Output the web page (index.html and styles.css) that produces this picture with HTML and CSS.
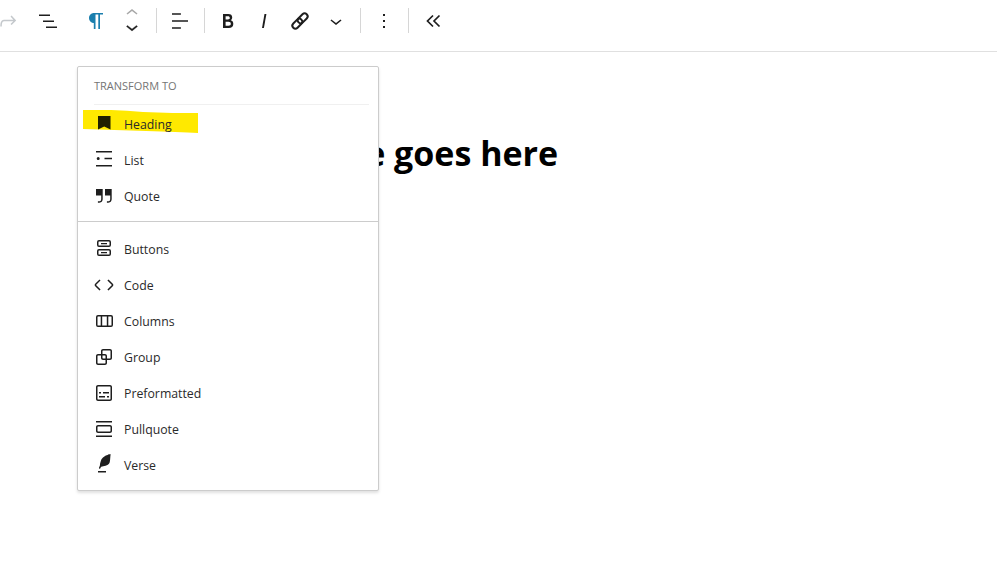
FILE: index.html
```html
<!DOCTYPE html>
<html lang="en">
<head>
<meta charset="utf-8">
<title>Transform block</title>
<link rel="stylesheet" href="styles.css">
</head>
<body>
<header class="toolbar">
  <button class="tool tool-redo"><svg viewBox="0 0 24 24"><path d="M15.6 6.5l-1.1 1 2.9 3.3H8c-.9 0-1.7.3-2.3.9-1.4 1.5-1.4 4.2-1.4 5.6v.2h1.5v-.3c0-1.1 0-3.5 1-4.5.3-.3.7-.5 1.3-.5h9.2L14.5 15l1.1 1.1 4.6-4.6-4.6-5z"/></svg></button>
  <button class="tool tool-list"><svg viewBox="0 0 24 24"><path d="M4 7h11V5.500H4zM8 13h11v-1.500H8zM11 19h11v-1.500H11z"/></svg></button>
  <button class="tool tool-para"><svg viewBox="0 0 24 24"><path d="M20 4H11c-2.800 0-5 2.200-5 5s2.200 5 4.800 5V20h1.700V5.500h2.800V20h1.700V5.500H20z"/></svg></button>
  <div class="mover">
    <svg class="mover-up" viewBox="0 0 24 24"><path d="M6.500 12.400L12 8l5.500 4.400-.9 1.200L12 10l-4.500 3.600-1-1.200z"/></svg>
    <svg class="mover-down" viewBox="0 0 24 24"><path d="M17.500 11.600L12 16l-5.500-4.400.9-1.200L12 14l4.500-3.600 1 1.200z"/></svg>
  </div>
  <span class="sep sep-first"></span>
  <button class="tool"><svg viewBox="0 0 24 24"><path d="M4 19.800h8.900v-1.500H4v1.500zm8.900-15.600H4v1.500h8.900V4.200zm-8.900 7v1.500h16v-1.500H4z"/></svg></button>
  <span class="sep"></span>
  <button class="tool"><svg viewBox="0 0 24 24"><path d="M14.700 11.300c1-.6 1.500-1.600 1.500-3 0-2.300-1.300-3.400-4-3.400H7v14h5.800c1.400 0 2.500-.3 3.300-1 .8-.7 1.200-1.700 1.200-2.900.1-1.900-.8-3.100-2.600-3.700zm-5.100-4h2.300c.6 0 1.100.1 1.400.4.3.3.5.7.5 1.200s-.2 1-.5 1.200c-.3.3-.8.4-1.400.4H9.600V7.300zm4.600 9c-.4.3-1 .4-1.700.4H9.600v-3.900h2.900c.7 0 1.300.2 1.700.5.4.3.6.8.6 1.500s-.2 1.200-.6 1.500z"/></svg></button>
  <button class="tool"><svg viewBox="0 0 24 24"><path d="M12.500 5L10 19h1.900l2.500-14z"/></svg></button>
  <button class="tool"><svg class="icon-link" viewBox="0 0 24 24"><g transform="rotate(-45 12 12)"><rect x="2.500" y="9" width="11.500" height="6" rx="3"/><rect x="10" y="9" width="11.500" height="6" rx="3"/></g></svg></button>
  <button class="tool"><svg viewBox="0 0 24 24"><path d="M17.500 11.600L12 16l-5.500-4.400.9-1.200L12 14l4.500-3.600 1 1.200z"/></svg></button>
  <span class="sep"></span>
  <button class="tool"><svg viewBox="0 0 24 24"><path d="M13 19h-2v-2h2v2zm0-6h-2v-2h2v2zm0-6h-2V5h2v2z"/></svg></button>
  <span class="sep"></span>
  <button class="tool tool-collapse"><svg class="icon-collapse" viewBox="0 0 24 24"><path d="M12 6.500 6.500 12l5.500 5.500M18.500 6.500 13 12l5.500 5.500"/></svg></button>
</header>

<main class="canvas">
  <h1 class="title">Your title goes here</h1>
</main>

<section class="popover">
  <svg class="marker" viewBox="0 0 115 24"><path d="M0 0C20-.5 40 0 60 2C80 3 100 3 115 3L115 23C90 22 40 20 0 19z"/></svg>
  <div class="group group-top">
    <h2 class="group-title">TRANSFORM TO</h2>
    <div class="rule"></div>
    <div class="item"><svg class="icon-mark" viewBox="0 0 24 24"><path d="M6 4h12.500v13.500L12.200 14.500 6 17.500z"/></svg><span>Heading</span></div>
    <div class="item"><svg viewBox="0 0 24 24"><path d="M4 3h16v1.400H4zM4 17h16v1.400H4zM12.500 9.800H20v1.400h-7.500zM6.200 9a1.500 1.500 0 1 1 0 3 1.500 1.500 0 0 1 0-3z"/></svg><span>List</span></div>
    <div class="item"><svg viewBox="0 0 24 24"><path d="M13 5v6.500h5.200V15c0 .8-.2 1.400-.5 1.700-.6.6-1.600.6-2.500.5h-.3v1.500h.5c1 0 2.300-.1 3.300-1 .6-.6 1-1.600 1-2.800V5H13zm-9 6.500h5.200V15c0 .8-.2 1.400-.5 1.700-.6.6-1.600.6-2.500.5h-.3v1.500h.5c1 0 2.300-.1 3.300-1 .6-.6 1-1.600 1-2.800V5H4v6.500z"/></svg><span>Quote</span></div>
  </div>
  <div class="group group-bottom">
    <div class="item"><svg viewBox="0 0 24 24"><path fill-rule="evenodd" d="M7 3h10a2 2 0 0 1 2 2v3a2 2 0 0 1-2 2H7a2 2 0 0 1-2-2V5a2 2 0 0 1 2-2zm0 1.500a.5.5 0 0 0-.5.5v3a.5.5 0 0 0 .5.5h10a.5.5 0 0 0 .5-.5V5a.5.5 0 0 0-.5-.5zM7 12h10a2 2 0 0 1 2 2v3a2 2 0 0 1-2 2H7a2 2 0 0 1-2-2v-3a2 2 0 0 1 2-2zm0 1.500a.5.5 0 0 0-.5.5v3a.5.5 0 0 0 .5.5h10a.5.5 0 0 0 .5-.5v-3a.5.5 0 0 0-.5-.5zM9 6h6v1.300H9zM9 15h6v1.300H9z"/></svg><span>Buttons</span></div>
    <div class="item"><svg viewBox="0 0 24 24"><path d="M20.800 10.700l-4.300-4.300-1.100 1.100 4.300 4.300c.1.100.1.300 0 .4l-4.300 4.300 1.100 1.100 4.300-4.300c.7-.8.7-1.900 0-2.600zM4.200 11.800l4.300-4.300-1-1-4.300 4.300c-.7.700-.7 1.800 0 2.500l4.300 4.300 1.100-1.100-4.300-4.300c-.2-.1-.2-.3-.1-.4z"/></svg><span>Code</span></div>
    <div class="item"><svg viewBox="0 0 24 24"><path fill-rule="evenodd" d="M6 6h13a2 2 0 0 1 2 2v8a2 2 0 0 1-2 2H6a2 2 0 0 1-2-2V8a2 2 0 0 1 2-2zm0 1.500a.5.5 0 0 0-.5.5v8a.5.5 0 0 0 .5.500h2.700v-9zm4.200 0v9h4.600v-9zm6.100 0v9H19a.5.5 0 0 0 .5-.5V8a.5.5 0 0 0-.5-.5z"/></svg><span>Columns</span></div>
    <div class="item"><svg viewBox="0 0 24 24"><path d="M18 4h-7c-1.100 0-2 .9-2 2v3H6c-1.100 0-2 .9-2 2v7c0 1.100.9 2 2 2h7c1.100 0 2-.9 2-2v-3h3c1.100 0 2-.9 2-2V6c0-1.100-.9-2-2-2zm-4.500 14c0 .3-.2.5-.5.5H6c-.3 0-.5-.2-.5-.5v-7c0-.3.2-.5.5-.5h3V13c0 1.100.9 2 2 2h2.500v3zm0-4.500H11c-.3 0-.5-.2-.5-.5v-2.500H13c.3 0 .5.2.5.5v2.500zm5-.5c0 .3-.2.5-.5.500h-3V11c0-1.100-.9-2-2-2h-2.500V6c0-.3.2-.5.5-.5h7c.3 0 .5.2.5.5v7z"/></svg><span>Group</span></div>
    <div class="item"><svg viewBox="0 0 24 24"><path d="M18 4H6c-1.100 0-2 .9-2 2v12c0 1.100.9 2 2 2h12c1.100 0 2-.9 2-2V6c0-1.100-.9-2-2-2zm.5 14c0 .3-.2.5-.5.5H6c-.3 0-.5-.2-.5-.5V6c0-.3.2-.5.5-.5h12c.3 0 .5.2.5.5v12zM7 16.500h6V15H7v1.500zm4-4h6V11h-6v1.500zM9 11H7v1.500h2V11zm6 5.500h2V15h-2v1.500z"/></svg><span>Preformatted</span></div>
    <div class="item"><svg viewBox="0 0 24 24"><path d="M18 8H6c-1.100 0-2 .9-2 2v4c0 1.100.9 2 2 2h12c1.100 0 2-.9 2-2v-4c0-1.100-.9-2-2-2zm.5 6c0 .3-.2.5-.5.5H6c-.3 0-.5-.2-.5-.5v-4c0-.3.2-.5.5-.5h12c.3 0 .5.2.5.5v4zM4 4v1.500h16V4H4zm0 16h16v-1.500H4V20z"/></svg><span>Pullquote</span></div>
    <div class="item"><svg viewBox="0 0 24 24"><path d="M18.500 1l-.9.3c-.1 0-3.600 1-5.200 2.100C10.700 4.500 10 5.500 9.600 6.100c-.6.900-1.700 4.700-1.700 6.300l-.9 2.300c-.2.400 0 .8.400 1 .1 0 .2.1.3.1.3 0 .6-.2.7-.5l.6-1.500c.3 0 .7-.1 1.200-.2.700-.1 1.400-.3 2.200-.5.800-.2 1.600-.5 2.400-.8.700-.3 1.400-.7 1.900-1.200s.8-1.200 1-1.900c.2-.7.3-1.600.4-2.400.1-.8.1-1.700.2-2.500 0-.8.1-1.500.2-2.100V1zM6 19.500h8V18H6v1.500z"/></svg><span>Verse</span></div>
  </div>
</section>
</body>
</html>
```

FILE: styles.css
```css
* { box-sizing: border-box; }

html, body {
  margin: 0;
  height: 100%;
  overflow: hidden;
  background: #fff;
}

body {
  position: relative;
  font-family: "Open Sans", "Noto Sans", sans-serif;
  color: #1e1e1e;
}

.toolbar {
  display: flex;
  align-items: center;
  height: 52px;
  padding-bottom: 10px;
  border-bottom: 1px solid #e0e0e0;
}

.tool {
  flex: none;
  display: flex;
  align-items: center;
  justify-content: center;
  width: 36px;
  height: 36px;
  padding: 0;
  border: 0;
  background: none;
}

.tool svg { width: 24px; height: 24px; fill: #1e1e1e; }

.tool-redo { margin-left: -10px; }
.tool-redo svg { fill: #c4c8cc; }
.tool-list { margin-left: 3px; }
.tool-para { margin-left: 12px; }
.tool-para svg { fill: #1b7fae; }
.tool-collapse { margin-left: 1px; }

.tool .icon-link {
  fill: none;
  stroke: #1e1e1e;
  stroke-width: 2;
}

.tool .icon-collapse {
  fill: none;
  stroke: #1e1e1e;
  stroke-width: 1.700;
}

.mover {
  flex: none;
  display: flex;
  flex-direction: column;
  align-items: center;
  width: 24px;
  margin: 0 0 2px 7px;
}

.mover svg { width: 24px; height: 24px; flex: none; }
.mover-up { fill: #a8a8a8; }
.mover-down { fill: #1e1e1e; margin-top: -10px; stroke: #1e1e1e; stroke-width: .3; }

.sep {
  flex: none;
  width: 1px;
  height: 25px;
  margin: 0 5px 0 6px;
  background: #d6d6d6;
}

.sep-first { margin-left: 12px; }

.canvas { padding: 79px 0 0 226px; }

.title {
  margin: 0;
  font-size: 34px;
  line-height: 44px;
  font-weight: 700;
  color: #000;
  white-space: nowrap;
}

.popover {
  position: absolute;
  left: 77px;
  top: 66px;
  width: 302px;
  height: 425px;
  background: #fff;
  border: 1px solid #ccc;
  border-radius: 2px;
  box-shadow: 0 2px 3px rgba(0, 0, 0, .12);
}

.marker {
  position: absolute;
  left: 5px;
  top: 43px;
  width: 115px;
  height: 24px;
  fill: #ffe900;
}

.group { position: relative; padding: 0 9px 0 14px; }

.group-top { height: 155px; padding-top: 12px; border-bottom: 1px solid #ccc; }
.group-bottom { padding-top: 9px; }

.group-title {
  margin: 0 0 0 2px;
  height: 13px;
  font-size: 11px;
  line-height: 13px;
  font-weight: 400;
  color: #757575;
}

.rule {
  height: 1px;
  margin: 12px 0 0 2px;
  background: #f0f0f0;
}

.group-top .rule + .item { margin-top: 1px; }

.item {
  display: flex;
  align-items: center;
  gap: 8px;
  height: 36px;
  font-size: 12.300px;
  color: #2a2a2a;
}

.item svg { flex: none; width: 24px; height: 24px; fill: #1e1e1e; }
.item .icon-mark { fill: #1f1f00; }
```
